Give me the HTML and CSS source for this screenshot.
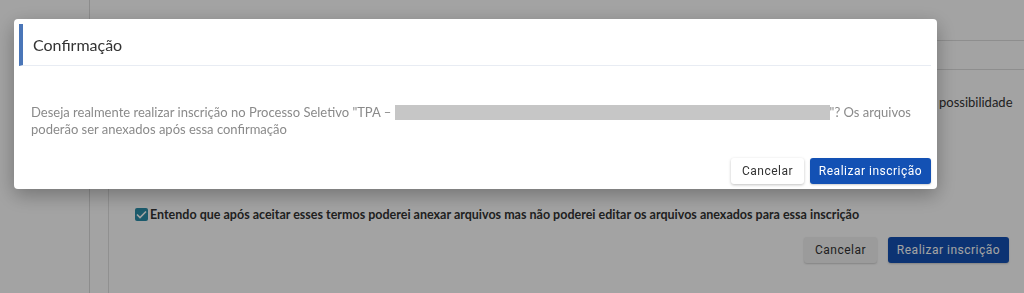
FILE: index.html
```html
<!DOCTYPE html>
<html lang="pt-BR">
<head>
    <meta charset="UTF-8">
    <title>Inscrição</title>
    <link rel="stylesheet" href="styles.css">
</head>
<body>
    <div class="page">
        <div class="sidebar"></div>
        <div class="main">
            <div class="top-bar"></div>
            <div class="sub-bar"></div>
            <p class="bg-text">possibilidade</p>
            <div class="card">
                <label class="check-row">
                    <span class="check">
                        <svg width="11" height="9" viewBox="0 0 11 9"><path d="M1 4.5l3 3 6-6" fill="none" stroke="#fff" stroke-width="1.6"/></svg>
                    </span>
                    Entendo que após aceitar esses termos poderei anexar arquivos mas não poderei editar os arquivos anexados para essa inscrição
                </label>
                <div class="card-actions">
                    <button class="btn btn-light">Cancelar</button>
                    <button class="btn btn-primary">Realizar inscrição</button>
                </div>
            </div>
        </div>
    </div>

    <div class="backdrop"></div>

    <div class="dialog">
        <div class="dialog-header">
            <h2>Confirmação</h2>
        </div>
        <div class="dialog-body">
            Deseja realmente realizar inscrição no Processo Seletivo "TPA – <span class="redacted"></span>"? Os arquivos poderão ser anexados após essa confirmação
        </div>
        <div class="dialog-actions">
            <button class="btn btn-white">Cancelar</button>
            <button class="btn btn-primary">Realizar inscrição</button>
        </div>
    </div>
</body>
</html>
```

FILE: styles.css
```css
body {
    margin: 0;
    font-family: Lato, "Open Sans", sans-serif;
    background-color: #fff;
    width: 1024px;
    height: 293px;
    overflow: hidden;
}
.page {
    display: flex;
    height: 293px;
}
.sidebar {
    width: 89px;
    border-right: 1px solid #dcdcdc;
    background-color: #fff;
}
.main {
    flex: 1;
    padding-left: 18px;
}
.top-bar {
    height: 40px;
    border-bottom: 1px solid #dedede;
}
.sub-bar {
    height: 28px;
    border-bottom: 1px solid #dedede;
}
.bg-text {
    margin: 24px 0 0 831px;
    font-size: 13px;
    color: #333;
    white-space: nowrap;
}
.card {
    margin-top: 78px;
    height: 112px;
    border: 1px solid #e2e2e2;
    border-top: none;
    border-right: none;
    border-radius: 0 0 0 5px;
    padding-left: 26px;
    box-sizing: border-box;
}
.check-row {
    display: flex;
    align-items: center;
    gap: 2px;
    padding-top: 19px;
    font-size: 12.5px;
    font-weight: bold;
    color: #333;
}
.check {
    width: 13px;
    height: 13px;
    background-color: #2b8ea9;
    border-radius: 2px;
    display: flex;
    align-items: center;
    justify-content: center;
}
.card-actions {
    display: flex;
    justify-content: flex-end;
    gap: 11px;
    margin-top: 15px;
    padding-right: 15px;
}
.btn {
    font-family: Roboto, sans-serif;
    font-size: 12px;
    font-weight: normal;
    letter-spacing: 0.5px;
    white-space: nowrap;
    height: 26px;
    border: none;
    border-radius: 3px;
    padding: 0;
    cursor: pointer;
}
.btn-light {
    background-color: #f2f2f2;
    color: #333;
    box-shadow: 0 1px 2px rgba(0, 0, 0, 0.2);
    width: 73px;
}
.btn-white {
    background-color: #fff;
    color: #333;
    box-shadow: 0 1px 3px rgba(0, 0, 0, 0.25);
    width: 73px;
}
.btn-primary {
    background-color: #1351b4;
    color: #fff;
    box-shadow: 0 1px 2px rgba(0, 0, 0, 0.2);
    width: 121px;
}
.backdrop {
    position: fixed;
    inset: 0;
    background-color: rgba(0, 0, 0, 0.36);
}
.dialog {
    position: fixed;
    left: 14px;
    top: 19px;
    width: 923px;
    height: 170px;
    background-color: #fff;
    border-radius: 4px;
    box-shadow: 0 6px 20px rgba(0, 0, 0, 0.3);
    box-sizing: border-box;
    padding: 5px 6px 5px 5px;
    display: flex;
    flex-direction: column;
}
.dialog-header {
    border-left: 4px solid #4a76b8;
    border-bottom: 1px solid #e8ecf3;
    height: 41px;
    display: flex;
    align-items: center;
    padding-left: 10px;
}
.dialog-header h2 {
    margin: 0;
    font-size: 16px;
    font-weight: normal;
    color: #333;
}
.dialog-body {
    padding: 38px 12px 0 12px;
    font-size: 13px;
    line-height: 17px;
    color: #8a8a8a;
}
.redacted {
    display: inline-block;
    width: 435px;
    height: 15px;
    background-color: #c6c6c6;
    vertical-align: -3px;
}
.dialog-actions {
    margin-top: auto;
    display: flex;
    justify-content: flex-end;
    gap: 6px;
}
```
